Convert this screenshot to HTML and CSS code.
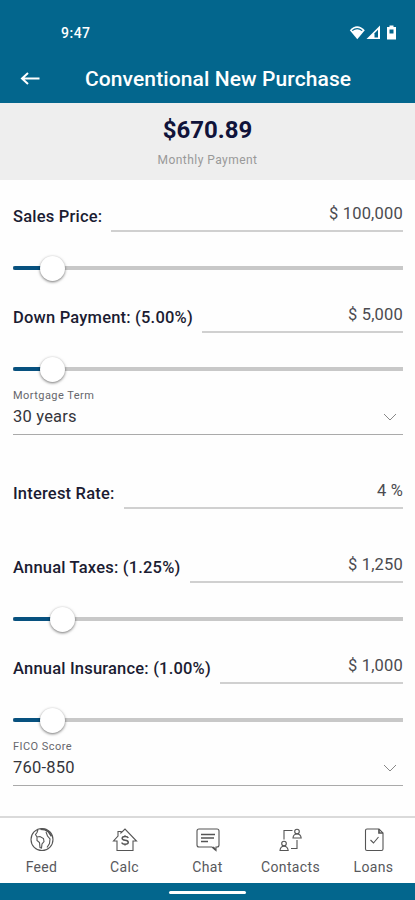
FILE: index.html
```html
<!DOCTYPE html>
<html lang="en">
<head>
    <meta charset="UTF-8">
    <meta name="viewport" content="width=device-width, initial-scale=1.0">
    <title>Conventional New Purchase</title>
    <link rel="stylesheet" href="styles.css">
</head>
<body>
<div class="status">
    <span class="time">9:47</span>
    <svg class="signals" width="48" height="16" viewBox="0 0 48 16">
        <path d="M0.8 5.2Q8 -2.6 15.8 5.2L8.3 14.2Z" fill="#fff"/>
        <path d="M3.2 5.6Q8.2 1.6 13.2 5.6" fill="none" stroke="#03668d" stroke-width="1.2"/>
        <path d="M17.5 14L31 0.5V14Z" fill="#fff"/>
        <path d="M25.5 8.3L29 4.8V12.4H25.5Z" fill="#03668d"/>
        <path d="M40.5 .5h4V2H47v12.5h-9V2h2.5Z" fill="#fff"/>
        <path d="M40.5 4.5h4v4h-4Z" fill="#03668d"/>
    </svg>
</div>
<div class="header">
    <svg class="back" width="20" height="14" viewBox="0 0 20 14">
        <path d="M19.5 6.5H2M8 1L2 6.500l6 5.500" fill="none" stroke="#fff" stroke-width="2"/>
    </svg>
    <h1>Conventional New Purchase</h1>
</div>
<div class="summary">
    <p class="amount">$670.89</p>
    <p class="caption">Monthly Payment</p>
</div>

<div class="form">
    <div class="field">
        <span class="label">Sales Price:</span>
        <span class="value">$ 100,000</span>
    </div>
    <div class="slider"><div class="fill" style="width: 10%"></div><div class="knob"></div></div>

    <div class="field">
        <span class="label">Down Payment: (5.00%)</span>
        <span class="value">$ 5,000</span>
    </div>
    <div class="slider"><div class="fill" style="width: 10%"></div><div class="knob"></div></div>

    <div class="select">
        <p class="name">Mortgage Term</p>
        <div class="choice">
            <span>30 years</span>
            <svg width="14" height="8" viewBox="0 0 14 8"><path d="M1 1l6 6 6-6"/></svg>
        </div>
    </div>

    <div class="field spaced">
        <span class="label">Interest Rate:</span>
        <span class="value">4 %</span>
    </div>

    <div class="field spaced">
        <span class="label">Annual Taxes: (1.25%)</span>
        <span class="value">$ 1,250</span>
    </div>
    <div class="slider"><div class="fill" style="width: 12.5%"></div><div class="knob"></div></div>

    <div class="field">
        <span class="label">Annual Insurance: (1.00%)</span>
        <span class="value">$ 1,000</span>
    </div>
    <div class="slider"><div class="fill" style="width: 10%"></div><div class="knob"></div></div>

    <div class="select">
        <p class="name">FICO Score</p>
        <div class="choice">
            <span>760-850</span>
            <svg width="14" height="8" viewBox="0 0 14 8"><path d="M1 1l6 6 6-6"/></svg>
        </div>
    </div>
</div>

<div class="tabs">
    <div class="tab">
        <svg width="26" height="26" viewBox="0 0 26 26">
            <circle cx="13" cy="12.5" r="11"/>
            <path d="M9 2.5L8 5.500 6.500 7.500 8 10l3-.5 3.500 2 .5 3-2 2.500-.5 4-1.500-.5-.5-5-2.500-2L8 10M17 5l1.500 4 2.500 3-.5 4.500-2.500 4"/>
            <path class="thick" d="M11.5 2.2l4.500 .5 3.500 2 3 4.500"/>
        </svg>
        <span>Feed</span>
    </div>
    <div class="tab">
        <svg width="26" height="26" viewBox="0 0 26 26">
            <path d="M5 23.5V14H1.500L6 9V4.500h3V6L13 2 24.500 14H21v9.500Z"/>
            <path class="sign" d="M16.300 11q-.5-1.500-3.200-1.500t-3 1.800q0 1.700 3 2t3.200 2q0 2-3.200 2t-3.200-1.700M13 8.200v1.300M13 17.300v1.300"/>
        </svg>
        <span>Calc</span>
    </div>
    <div class="tab">
        <svg width="26" height="26" viewBox="0 0 26 26">
            <path d="M4 2h18q2 0 2 2v14q0 2-2 2h-1v3.500L17 20H4q-2 0-2-2V4q0-2 2-2Z"/>
            <path d="M6 7.500h14M6 11h13M6 14.500h7" stroke-width="1.500"/>
            <path class="thick" d="M18 20.200l2.500 2.500"/>
        </svg>
        <span>Chat</span>
    </div>
    <div class="tab">
        <svg width="26" height="26" viewBox="0 0 26 26">
            <circle cx="19" cy="4.500" r="2.300"/>
            <path d="M15 11q.3-4 4-4t4.200 4Z"/>
            <circle cx="6" cy="16.500" r="2.300"/>
            <path d="M2 23.500q.3-4.300 4-4.300t4.200 4.300Z"/>
            <path d="M6 12.500v-9h8.500M19 13v8.500H13"/>
        </svg>
        <span>Contacts</span>
    </div>
    <div class="tab">
        <svg width="26" height="26" viewBox="0 0 26 26">
            <path d="M6 2H18l4 4V22q0 1.500-1.500 1.500H6Q4.500 23.500 4.500 22V3.500Q4.500 2 6 2Z"/>
            <path class="thick" d="M18 2v4h4"/>
            <path d="M9.500 13l3 3 5-6"/>
        </svg>
        <span>Loans</span>
    </div>
</div>
<div class="homebar"><div class="pill"></div></div>
</body>
</html>
```

FILE: styles.css
```css
*{
    box-sizing: border-box;
}
body{
    margin: 0;
    height: 900px;
    display: flex;
    flex-direction: column;
    overflow: hidden;
    background: #fefefe;
    font-family: Roboto, sans-serif;
    color: #1b1c32;
}
p, h1{
    margin: 0;
}
.status{
    height: 55px;
    padding: 11px 18px 0 61px;
    display: flex;
    align-items: center;
    justify-content: space-between;
    background: #03668d;
    color: #fff;
}
.time{
    font-size: 14px;
    font-weight: 500;
    letter-spacing: .5px;
}
.header{
    height: 48px;
    padding-left: 20px;
    display: flex;
    align-items: center;
    gap: 45px;
    background: #03668d;
    color: #fff;
}
.header h1{
    font-size: 21px;
    font-weight: 500;
    line-height: 48px;
    letter-spacing: .1px;
}
.summary{
    height: 77px;
    padding-top: 12px;
    background: #eee;
    text-align: center;
}
.amount{
    font-size: 24px;
    font-weight: 700;
    line-height: 30px;
    color: #10133a;
}
.caption{
    margin-top: 7px;
    font-size: 12px;
    line-height: 16px;
    letter-spacing: .45px;
    color: #999;
}
.form{
    flex: 1;
    padding: 0 12px 0 13px;
}
.field{
    height: 52px;
    display: flex;
    align-items: flex-end;
    gap: 9px;
}
.spaced{
    margin-top: 22px;
}
.label{
    padding-bottom: 4px;
    font-size: 16.5px;
    font-weight: 500;
    line-height: 22px;
    letter-spacing: .2px;
}
.value{
    flex: 1;
    padding-bottom: 5px;
    border-bottom: 2px solid #d0d0d0;
    font-size: 16.5px;
    line-height: 22px;
    letter-spacing: .2px;
    text-align: right;
    color: #4b4b50;
}
.slider{
    height: 26px;
    margin-top: 23px;
    display: flex;
    align-items: center;
    background: linear-gradient(#c8c8c8, #c8c8c8) center / 100% 4px no-repeat;
}
.fill{
    height: 4px;
    border-radius: 2px 0 0 2px;
    background: #07517f;
}
.knob{
    width: 25px;
    height: 25px;
    margin-left: -12px;
    border-radius: 50%;
    background: #fff;
    box-shadow: 0 1px 3px rgba(0,0,0,.55);
}
.select{
    height: 53px;
    padding-top: 6px;
    border-bottom: 1px solid #aaa;
}
.name{
    font-size: 11px;
    line-height: 16px;
    letter-spacing: .45px;
    color: #66666c;
}
.choice{
    padding-right: 6px;
    display: flex;
    align-items: center;
    justify-content: space-between;
    font-size: 16.5px;
    line-height: 25px;
    letter-spacing: .2px;
    color: #35353b;
}
.choice svg{
    fill: none;
    stroke: #888;
}
.tabs{
    height: 67px;
    display: flex;
    border-top: 2px solid #dadada;
    background: #fff;
}
.tab{
    flex: 1;
    padding-top: 9px;
    display: flex;
    flex-direction: column;
    align-items: center;
    font-size: 14px;
    line-height: 29px;
    letter-spacing: .35px;
    color: #58585c;
}
.tab svg{
    fill: none;
    stroke: #555;
    stroke-width: 1.1;
}
.tab .thick{
    stroke-width: 1.7;
}
.tab .sign{
    stroke-width: 1.4;
}
.homebar{
    height: 17px;
    padding-top: 8px;
    background: #03668d;
}
.pill{
    width: 77px;
    height: 3px;
    margin: 0 auto;
    border-radius: 2px;
    background: #fff;
}
```
